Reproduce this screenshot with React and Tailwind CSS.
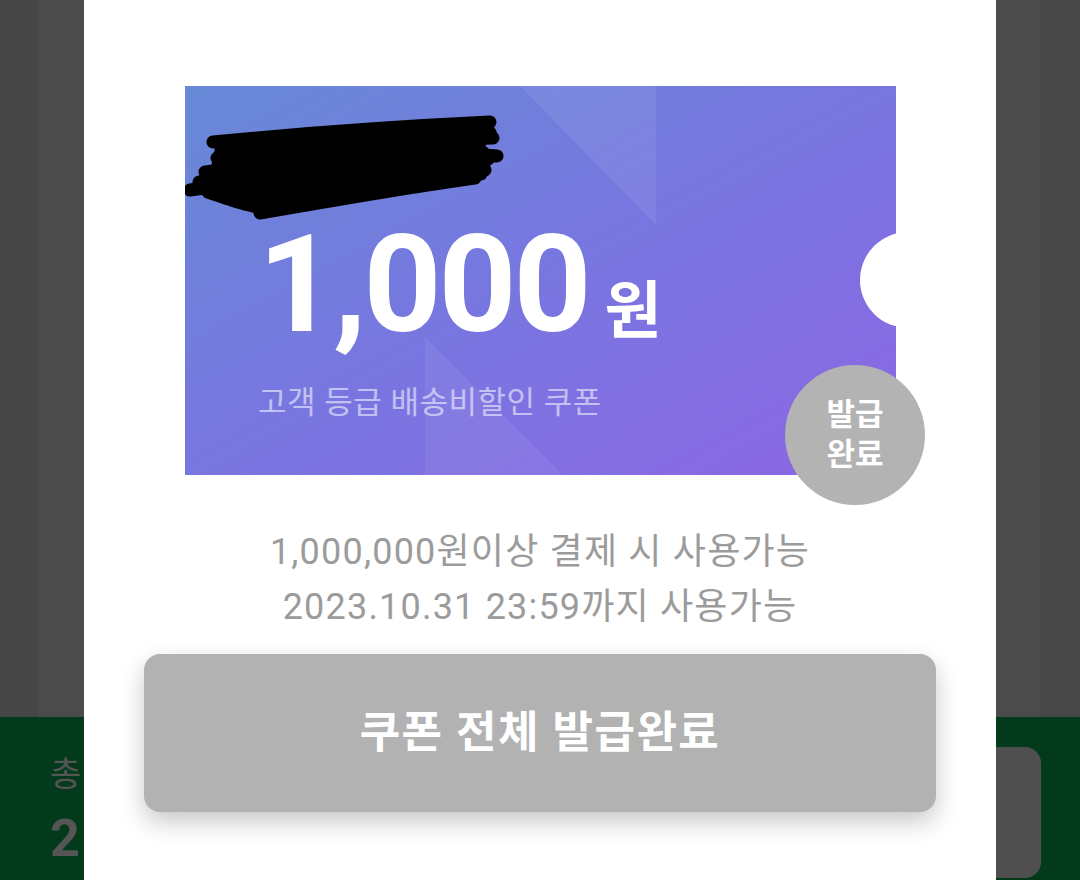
import React from "react";

const font = { fontFamily: "Roboto, 'Noto Sans CJK KR', sans-serif" };

function Scribble() {
    // 쿠폰 이름을 가린 검은 낙서
    return (
        <svg className="absolute left-0 top-0" width="330" height="140" viewBox="0 0 330 140" fill="none">
            <path d="M8 100 L25 86 L30 62 L120 48 L210 40 L305 34 L312 46 L300 60 L312 74 L295 88 L240 96 L130 118 L80 130 L50 122 L20 112 Z" fill="#000" />
            <g stroke="#000" strokeWidth="13" strokeLinecap="round">
                <path d="M28 56 C 110 48, 220 40, 305 36" />
                <path d="M32 72 C 120 62, 220 54, 308 52" />
                <path d="M20 86 C 120 74, 230 62, 312 70" />
                <path d="M5 104 C 60 96, 120 88, 180 80" />
                <path d="M14 96 C 120 84, 230 74, 300 84" />
                <path d="M40 112 C 140 100, 220 90, 296 88" />
                <path d="M75 127 C 150 114, 230 100, 290 92" />
                <path d="M60 118 C 140 106, 200 96, 250 90" />
                <path d="M240 44 C 270 50, 290 58, 300 68" />
            </g>
        </svg>
    );
}

function Coupon() {
    return (
        <div className="relative w-[711px] h-[389px] bg-linear-to-br from-[#6689d6] via-[#7876e0] to-[#8c66e4]">
            <svg className="absolute inset-0" width="711" height="389" viewBox="0 0 711 389">
                <polygon points="335,0 471,0 471,139" fill="#ffffff" fillOpacity="0.07" />
                <polygon points="240,251 240,389 378,389" fill="#ffffff" fillOpacity="0.06" />
            </svg>
            <Scribble />
            <div className="absolute left-[675px] top-[146px] w-[96px] h-[96px] rounded-full bg-white" />

            <div className="flex flex-col pl-[73px] pt-[139px]">
                <div className="flex items-end text-white font-bold">
                    <span className="text-[136px] leading-[120px] tracking-[-3px]">1,000</span>
                    <span className="text-[62px] leading-[62px] ml-[16px] mb-[2px]">원</span>
                </div>
                <p className="mt-[41px] text-[31px] leading-[34px] tracking-[0.5px] text-white/55">고객 등급 배송비할인 쿠폰</p>
            </div>

            <div className="absolute left-[600px] top-[279px] w-[140px] h-[140px] rounded-full bg-[#b3b3b3] flex flex-col items-center justify-center text-white font-bold text-[31px] leading-[40px]">
                <span>발급</span>
                <span>완료</span>
            </div>
        </div>
    );
}

export default function App() {
    return (
        <div className="relative w-[1080px] h-[880px] overflow-hidden bg-[#4b4b4b]" style={font}>
            {/* 뒤쪽 페이지 */}
            <div className="flex flex-col h-full">
                <div className="flex flex-1">
                    <div className="w-[38px] bg-[#464646]" />
                    <div className="flex-1 bg-[#4b4b4b]" />
                    <div className="w-[40px] bg-[#484848]" />
                </div>
                <div className="h-[163px] bg-[#033a1b] flex items-start justify-between pl-[50px] pr-[39px] pt-[30px]">
                    <div className="flex flex-col text-[#555555] pt-[7px]">
                        <span className="text-[34px] leading-[40px]">총</span>
                        <span className="mt-[15px] text-[52px] leading-[60px] font-bold">2</span>
                    </div>
                    <div className="w-[300px] h-[131px] rounded-[16px] bg-[#4f4f4f]" />
                </div>
            </div>

            {/* 모달 */}
            <div className="absolute left-[84px] top-0 w-[912px] h-[880px] bg-white flex flex-col items-center">
                <div className="mt-[86px] ml-[1px]">
                    <Coupon />
                </div>
                <div className="mt-[50px] flex flex-col items-center text-[36px] leading-[55px] tracking-[1.2px] text-[#9b9b9b]">
                    <p>1,000,000원이상 결제 시 사용가능</p>
                    <p>2023.10.31 23:59까지 사용가능</p>
                </div>
                <button className="mt-[19px] w-[792px] h-[158px] rounded-[16px] bg-[#b2b2b2] text-white font-bold text-[44px] tracking-[1.5px] shadow-[0_10px_24px_rgba(0,0,0,0.22)]">
                    쿠폰 전체 발급완료
                </button>
            </div>
        </div>
    );
}
